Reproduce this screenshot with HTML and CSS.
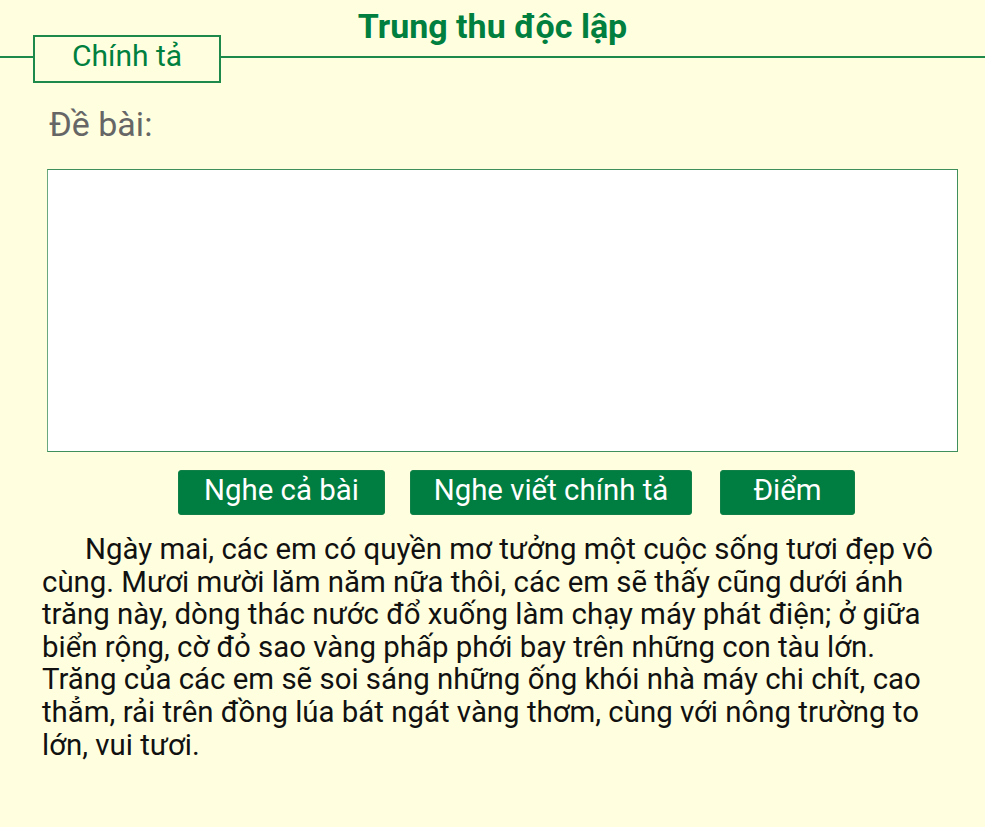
FILE: index.html
```html
<!DOCTYPE html>
<html lang="vi">
<head>
<meta charset="utf-8">
<title>Trung thu độc lập</title>
<link rel="stylesheet" href="styles.css">
</head>
<body>
<header class="header">
  <h1 class="title">Trung thu độc lập</h1>
  <div class="tab-row">
    <span class="tab-line tab-line-left"></span>
    <span class="tab">Chính tả</span>
    <span class="tab-line tab-line-right"></span>
  </div>
</header>
<main class="content">
  <h2 class="label">Đề bài:</h2>
  <textarea class="answer"></textarea>
  <div class="actions">
    <button class="btn btn-listen">Nghe cả bài</button>
    <button class="btn btn-dictate">Nghe viết chính tả</button>
    <button class="btn btn-score">Điểm</button>
  </div>
  <p class="passage">Ngày mai, các em có quyền mơ tưởng một cuộc sống tươi đẹp vô cùng. Mươi mười lăm năm nữa thôi, các em sẽ thấy cũng dưới ánh trăng này, dòng thác nước đổ xuống làm chạy máy phát điện; ở giữa biển rộng, cờ đỏ sao vàng phấp phới bay trên những con tàu lớn. Trăng của các em sẽ soi sáng những ống khói nhà máy chi chít, cao thẳm, rải trên đồng lúa bát ngát vàng thơm, cùng với nông trường to lớn, vui tươi.</p>
</main>
</body>
</html>
```

FILE: styles.css
```css
html, body {
  margin: 0;
  padding: 0;
  background: #ffffdf;
  font-family: Roboto, "Noto Sans", sans-serif;
}

.header {
  display: flex;
  flex-direction: column;
}

.title {
  margin: 0 0 -11px 0;
  padding-top: 6px;
  font-size: 34px;
  line-height: 40px;
  font-weight: 700;
  color: #007f3f;
  text-align: center;
}

.tab-row {
  display: flex;
  align-items: flex-start;
  height: 48px;
}

.tab-line {
  height: 2px;
  margin-top: 21px;
  background: #1d8a4c;
}

.tab-line-left {
  width: 33px;
}

.tab-line-right {
  flex: 1;
}

.tab {
  box-sizing: border-box;
  width: 188px;
  height: 48px;
  border: 2px solid #1d8a4c;
  display: flex;
  align-items: center;
  justify-content: center;
  padding-bottom: 7px;
  font-size: 30px;
  color: #007f3f;
}

.content {
  padding: 0 27px 0 42px;
  display: flex;
  flex-direction: column;
}

.label {
  margin: 21px 0 3px 7px;
  font-size: 34px;
  line-height: 40px;
  font-weight: 400;
  color: #666666;
}

.answer {
  box-sizing: border-box;
  margin: 22px 0 0 5px;
  width: 911px;
  height: 283px;
  border: 1px solid #3f8f5c;
  border-left-color: #6aa97f;
  background: #ffffff;
  resize: none;
  padding: 2px;
  font-family: Roboto, sans-serif;
  font-size: 16px;
}

.actions {
  display: flex;
  margin-top: 18px;
  padding-left: 136px;
  gap: 25px;
}

.btn {
  height: 45px;
  border: 1px solid #107f48;
  border-radius: 3px;
  background: #007d40;
  color: #ffffff;
  font-family: Roboto, sans-serif;
  font-size: 29.4px;
  padding: 0 0 5px 0;
}

.btn-listen {
  width: 207px;
}

.btn-dictate {
  width: 282px;
}

.btn-score {
  width: 135px;
  margin-left: 3px;
}

.passage {
  margin: 18px 0 0 0;
  max-width: 900px;
  font-size: 29.4px;
  line-height: 32.6px;
  text-indent: 43px;
  color: #111111;
}
```
